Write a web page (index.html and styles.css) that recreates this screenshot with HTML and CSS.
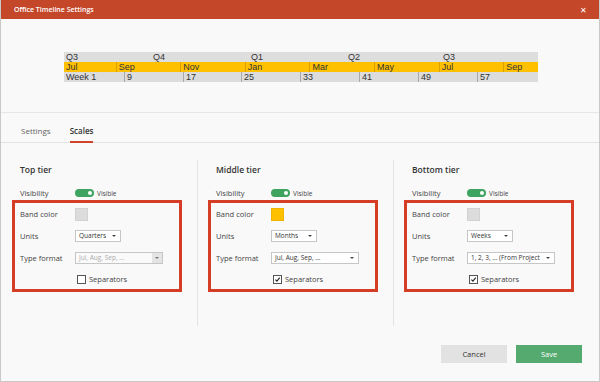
FILE: index.html
```html
<!DOCTYPE html>
<html lang="en">
<head>
    <meta charset="UTF-8">
    <title>Office Timeline Settings</title>
    <link rel="stylesheet" href="styles.css">
</head>
<body>
    <div class="window">
        <header class="titlebar">
            <span>Office Timeline Settings</span>
            <span class="close">&#x2715;</span>
        </header>

        <!-- timeline preview -->
        <section class="preview">
            <div class="timeline">
                <div class="row quarters">
                    <span class="q1">Q3</span>
                    <span class="q2">Q4</span>
                    <span class="q3">Q1</span>
                    <span class="q4">Q2</span>
                    <span class="q5">Q3</span>
                </div>
                <div class="row months">
                    <span class="first">Jul</span>
                    <span>Sep</span>
                    <span>Nov</span>
                    <span>Jan</span>
                    <span>Mar</span>
                    <span>May</span>
                    <span>Jul</span>
                    <span class="last">Sep</span>
                </div>
                <div class="row weeks">
                    <span class="first">Week 1</span>
                    <span>9</span>
                    <span class="narrow">17</span>
                    <span>25</span>
                    <span>33</span>
                    <span>41</span>
                    <span>49</span>
                    <span>57</span>
                </div>
            </div>
        </section>

        <nav class="tabs">
            <span class="tab">Settings</span>
            <span class="tab active">Scales</span>
        </nav>

        <main class="tiers">
            <div class="tier">
                <h3>Top tier</h3>
                <div class="field vis">
                    <label>Visibility</label>
                    <span class="toggle"></span><span class="toggle-text">Visible</span>
                </div>
                <div class="box">
                    <div class="field">
                        <label>Band color</label>
                        <span class="swatch"></span>
                    </div>
                    <div class="field">
                        <label>Units</label>
                        <span class="select small">Quarters</span>
                    </div>
                    <div class="field">
                        <label>Type format</label>
                        <span class="select wide disabled">Jul, Aug, Sep, ...</span>
                    </div>
                    <div class="field check">
                        <span class="checkbox"></span>Separators
                    </div>
                </div>
            </div>

            <div class="tier">
                <h3>Middle tier</h3>
                <div class="field vis">
                    <label>Visibility</label>
                    <span class="toggle"></span><span class="toggle-text">Visible</span>
                </div>
                <div class="box">
                    <div class="field">
                        <label>Band color</label>
                        <span class="swatch yellow"></span>
                    </div>
                    <div class="field">
                        <label>Units</label>
                        <span class="select small">Months</span>
                    </div>
                    <div class="field">
                        <label>Type format</label>
                        <span class="select wide">Jul, Aug, Sep, ...</span>
                    </div>
                    <div class="field check">
                        <span class="checkbox checked"><svg viewBox="0 0 10 10"><path d="M2 5.2 L4.2 7.4 L8.2 2.4" /></svg></span>Separators
                    </div>
                </div>
            </div>

            <div class="tier">
                <h3>Bottom tier</h3>
                <div class="field vis">
                    <label>Visibility</label>
                    <span class="toggle"></span><span class="toggle-text">Visible</span>
                </div>
                <div class="box">
                    <div class="field">
                        <label>Band color</label>
                        <span class="swatch"></span>
                    </div>
                    <div class="field">
                        <label>Units</label>
                        <span class="select small">Weeks</span>
                    </div>
                    <div class="field">
                        <label>Type format</label>
                        <span class="select wide">1, 2, 3, ... (From Project</span>
                    </div>
                    <div class="field check">
                        <span class="checkbox checked"><svg viewBox="0 0 10 10"><path d="M2 5.2 L4.2 7.4 L8.2 2.4" /></svg></span>Separators
                    </div>
                </div>
            </div>
        </main>

        <footer class="actions">
            <button class="btn cancel">Cancel</button>
            <button class="btn save">Save</button>
        </footer>
    </div>
</body>
</html>
```

FILE: styles.css
```css
/* dialog */
body {
    margin: 0;
    font-family: "Open Sans", "Noto Sans", sans-serif;
    color: #444;
}

.window {
    width: 600px;
    height: 382px;
    box-sizing: border-box;
    border: 1px solid #c9c9c9;
    border-top: 0;
    background-color: #f9f9f9;
    display: flex;
    flex-direction: column;
}

.titlebar {
    height: 19px;
    background-color: #c5472a;
    color: #fff;
    font-size: 7px;
    font-weight: 600;
    display: flex;
    align-items: center;
    justify-content: space-between;
    padding: 0 12px 0 13px;
    flex-shrink: 0;
}

.close {
    font-size: 8px;
    font-weight: 400;
}

/* preview */
.preview {
    height: 94px;
    box-sizing: border-box;
    padding: 33px 0 0 63px;
    border-bottom: 1px solid #e6e6e6;
    flex-shrink: 0;
}

.timeline {
    width: 474px;
    font-family: "Liberation Sans", Arial, sans-serif;
    font-size: 9px;
    color: #333;
}

.row {
    display: flex;
    height: 10px;
    line-height: 10px;
}

.row span {
    box-sizing: border-box;
    padding-left: 2px;
    white-space: nowrap;
}

.quarters {
    background-color: #dedede;
}

.quarters .q1 { width: 87px; }
.quarters .q2 { width: 98px; }
.quarters .q3 { width: 97px; }
.quarters .q4 { width: 95px; }

.months {
    background-color: #ffc000;
}

.months span {
    width: 65px;
    border-left: 1px solid #d9a100;
}

.months .first {
    width: 52px;
    border-left: 0;
}

.months .last {
    width: 35px;
}

.weeks {
    background-color: #dcdcdc;
}

.weeks span {
    width: 59px;
    border-left: 1px solid #a9a9a9;
}

.weeks .first {
    width: 60px;
    border-left: 0;
}

.weeks .narrow {
    width: 58px;
}

/* tabs */
.tabs {
    height: 30px;
    box-sizing: border-box;
    border-bottom: 1px solid #e3e3e3;
    display: flex;
    gap: 19px;
    padding-left: 20px;
    font-size: 8px;
    flex-shrink: 0;
}

.tab {
    padding-top: 12px;
    color: #666;
}

.tab.active {
    color: #333;
    font-weight: 600;
    height: 30px;
    box-sizing: border-box;
    border-bottom: 2px solid #d0452a;
}

/* tiers */
.tiers {
    display: grid;
    grid-template-columns: 196px 196px 1fr;
    margin-top: 17px;
    height: 166px;
}

.tier {
    padding: 4px 0 0 11px;
}

.tier + .tier {
    border-left: 1px solid #e3e3e3;
    padding-left: 10px;
}

.tier h3 {
    margin: 0 0 0 8px;
    font-size: 8.5px;
    font-weight: 600;
    color: #333;
    line-height: 12px;
}

.field {
    display: flex;
    align-items: center;
    height: 22px;
    font-size: 7.5px;
}

.field label {
    width: 55px;
    flex-shrink: 0;
}

.field.vis {
    height: 12px;
    margin: 11px 0 1px 8px;
}

.toggle {
    width: 19px;
    height: 8px;
    border-radius: 4px;
    background-color: #3da35f;
    position: relative;
}

.toggle::after {
    content: "";
    position: absolute;
    right: 2px;
    top: 2px;
    width: 4px;
    height: 4px;
    border-radius: 50%;
    background-color: #fff;
}

.toggle-text {
    font-size: 6.5px;
    margin-left: 3px;
}

.box {
    width: 170px;
    height: 92px;
    box-sizing: border-box;
    border: 3px solid #d63d26;
    padding-left: 5px;
}

.box .field {
    height: 22px;
}

.box .field.check {
    height: 20px;
    padding-left: 57px;
}

.swatch {
    width: 13px;
    height: 13px;
    box-sizing: border-box;
    background-color: #dcdcdc;
    border: 1px solid #d2d2d2;
}

.swatch.yellow {
    background-color: #ffc000;
    border-color: #f0b400;
}

.select {
    height: 12px;
    box-sizing: border-box;
    border: 1px solid #c6c6c6;
    background-color: #fff;
    font-size: 6.5px;
    line-height: 10px;
    padding-left: 3px;
    position: relative;
    color: #333;
    white-space: nowrap;
    overflow: hidden;
}

.select::after {
    content: "";
    position: absolute;
    right: 4px;
    top: 4px;
    border-left: 2px solid transparent;
    border-right: 2px solid transparent;
    border-top: 2px solid #444;
}

.select.small {
    width: 46px;
}

.select.wide {
    width: 88px;
    padding-right: 12px;
}

.select.disabled {
    color: #aaa;
    background-color: #fafafa;
}

.select.disabled::before {
    content: "";
    position: absolute;
    right: 0;
    top: 0;
    width: 10px;
    height: 10px;
    background-color: #e4e4e4;
}

.select.disabled::after {
    border-top-color: #777;
    right: 3px;
}

.checkbox {
    width: 9px;
    height: 9px;
    box-sizing: border-box;
    border: 1px solid #555;
    background-color: #fff;
    margin-right: 3px;
    display: flex;
}

.checkbox svg {
    width: 100%;
    height: 100%;
    fill: none;
    stroke: #222;
    stroke-width: 1.6;
}

/* buttons */
.actions {
    margin-top: auto;
    display: flex;
    justify-content: flex-end;
    gap: 9px;
    padding: 0 17px 18px 0;
}

.btn {
    width: 66px;
    height: 18px;
    border: 0;
    font-family: "Open Sans", "Noto Sans", sans-serif;
    font-size: 7.5px;
    padding: 0;
}

.cancel {
    background-color: #e2e2e2;
    color: #333;
}

.save {
    background-color: #55aa6f;
    color: #fff;
}
```
